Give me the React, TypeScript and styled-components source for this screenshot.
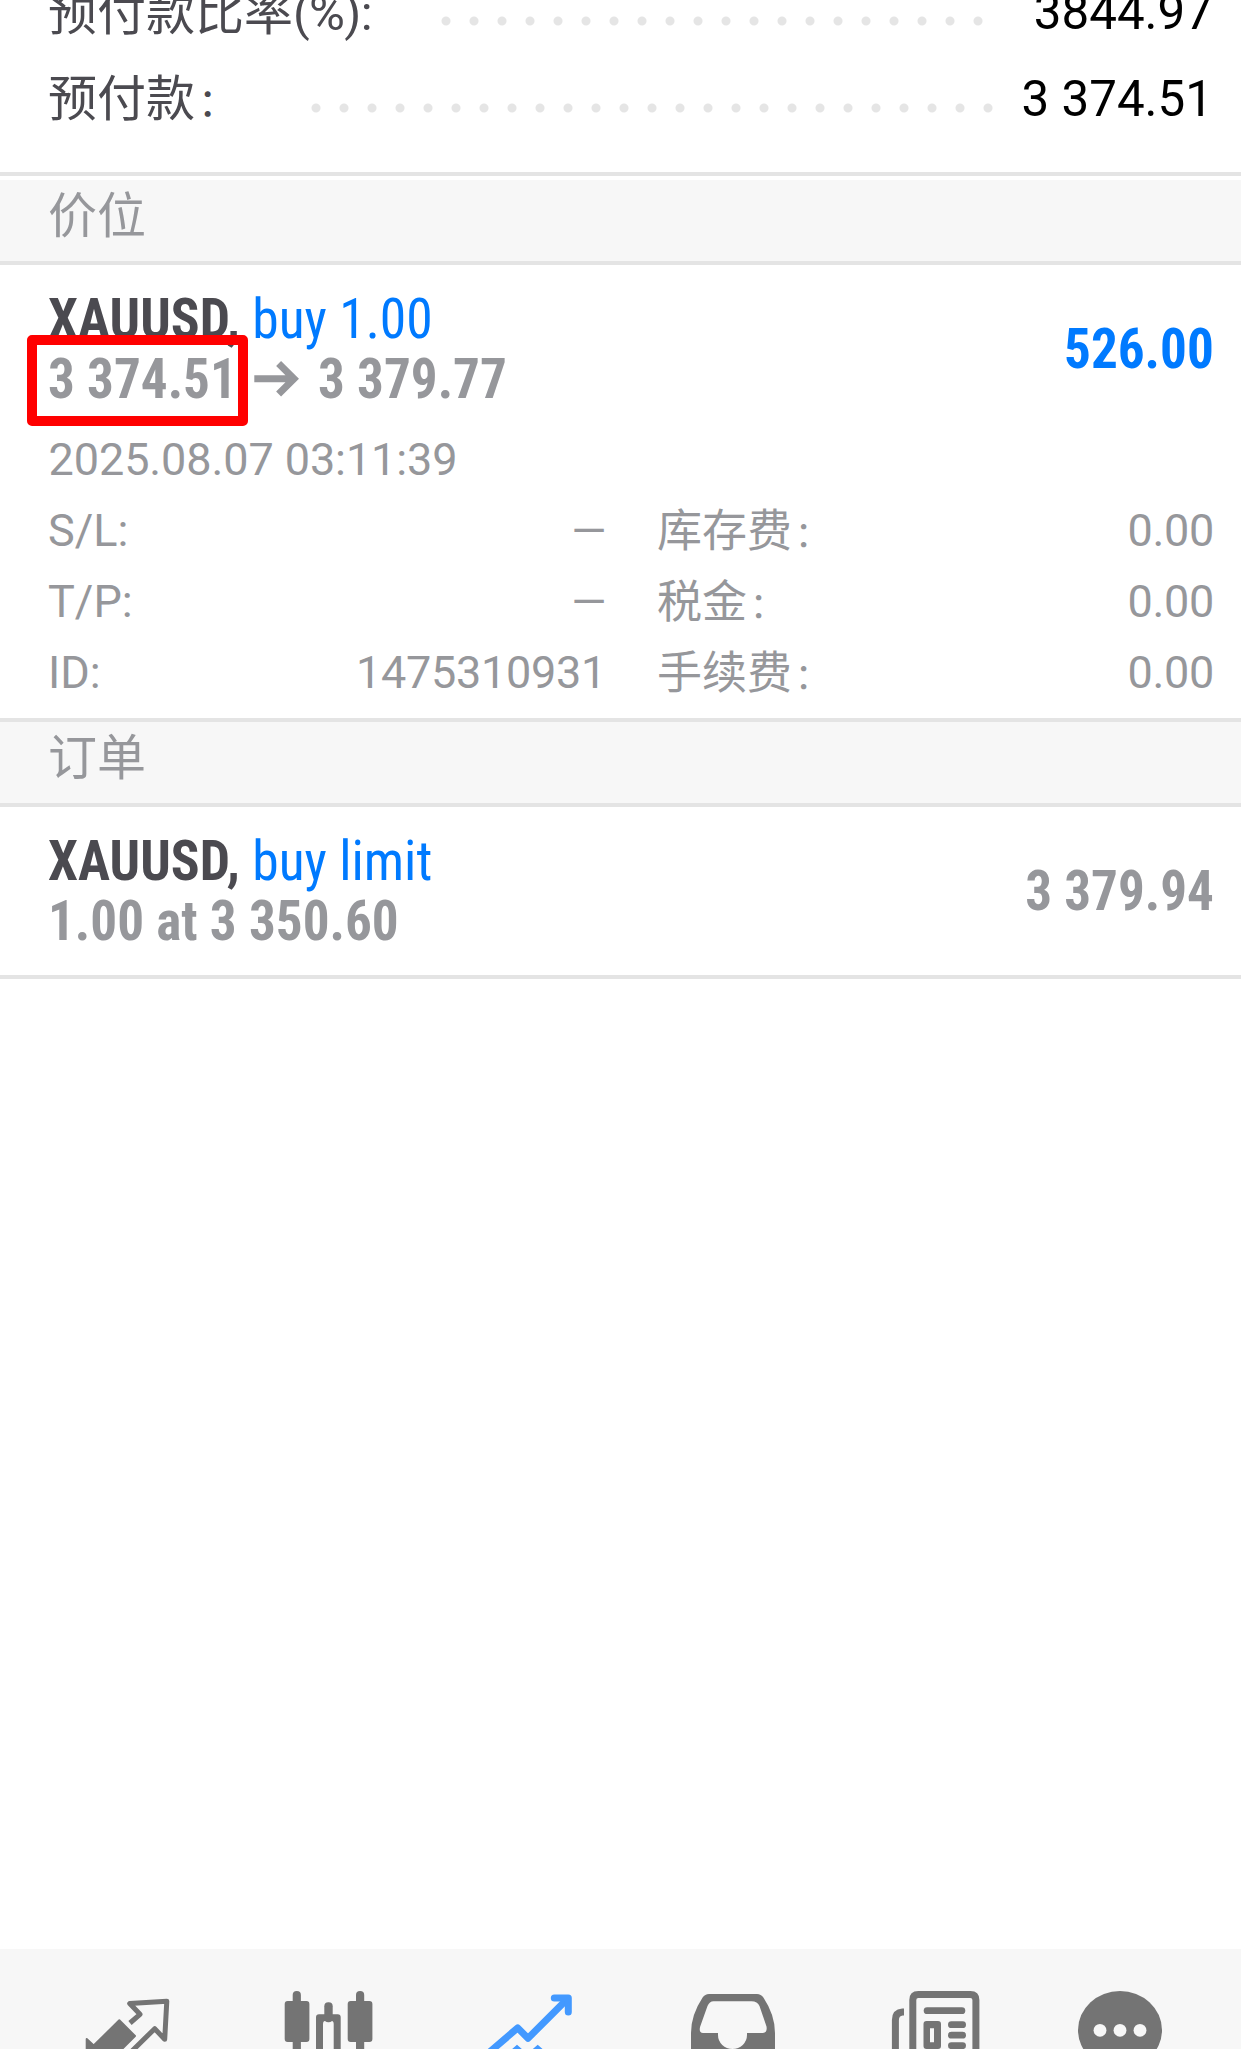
import React from "react";
import styled, { createGlobalStyle } from "styled-components";

const GlobalStyle = createGlobalStyle`
  * { box-sizing: border-box; }
  html, body { margin: 0; padding: 0; background: #fff; }
  body {
    font-family: Roboto, "Noto Sans CJK SC", sans-serif;
    color: #96979b;
    white-space: nowrap;
  }
`;

const Screen = styled.div`
  display: flex;
  flex-direction: column;
  width: 1241px;
  height: 2049px;
  overflow: hidden;
  background: #fff;
`;

const Summary = styled.section`
  display: flex;
  flex-direction: column;
  justify-content: flex-end;
  flex: none;
  height: 176px;
  padding: 0 28px 29px 48px;
  border-bottom: 4px solid #e4e4e4;
  margin-bottom: 4px;
  overflow: hidden;
`;

const SummaryRow = styled.div`
  display: flex;
  align-items: center;
  flex: none;
  height: 87px;
  line-height: 87px;
  font-size: 49px;
`;

const SummaryLabel = styled.span<{ $width: number }>`
  flex: none;
  width: ${(p) => p.$width}px;
  padding-top: 2px;
  color: #4b4a50;
`;

const Unit = styled.span`
  letter-spacing: -0.7px;
`;

const Colon = styled.span`
  font-size: 0.79em;
  margin-left: 0.08em;
`;

const Leader = styled.span<{ $dots: number }>`
  flex: none;
  width: ${(p) => p.$dots * 28}px;
  height: 28px;
  margin-top: 16px;
  background: radial-gradient(circle at 14px 14px, #e5e5e5 4px, transparent 5px) 0 0 / 28px 28px;
`;

const SummaryValue = styled.span`
  flex: 1;
  text-align: right;
  font-size: 49.3px;
  color: #000;
`;

const SectionTitle = styled.h2`
  flex: none;
  margin: 0;
  height: 85px;
  padding-left: 48px;
  font-size: 49px;
  font-weight: 400;
  line-height: 74px;
  background: #f7f7f7;
  border-bottom: 4px solid #e4e4e4;
`;

const Card = styled.article<{ $height: number }>`
  flex: none;
  height: ${(p) => p.$height}px;
  padding: 24px 27px 0 48px;
  border-bottom: 4px solid #e4e4e4;
`;

const CardHead = styled.div`
  display: flex;
  justify-content: space-between;
  align-items: center;
  height: 120px;
  font-family: "Roboto Condensed", Roboto, sans-serif;
  font-size: 56px;
  font-weight: 700;
  line-height: 60px;
`;

const HeadLine = styled.div`
  display: flex;
  align-items: center;
  height: 60px;
`;

const Narrow = styled.span<{ $from?: string; $by?: number }>`
  display: inline-block;
  white-space: pre;
  transform: scaleX(${(p) => p.$by ?? 0.949});
  transform-origin: ${(p) => p.$from ?? "left"} center;
`;

const Symbol = styled.span`
  color: #4b4a50;
`;

const Side = styled.span`
  color: #007aff;
  font-weight: 400;
`;

const Marked = styled.span`
  position: relative;
  width: 189px;

  &::after {
    content: "";
    position: absolute;
    box-sizing: border-box;
    left: -21px;
    top: -13.6px;
    width: 221px;
    height: 91px;
    border: 10px solid #ff0000;
    border-radius: 5px;
  }
`;

const Arrow = styled.svg`
  flex: none;
  width: 46px;
  height: 36px;
  margin: 0 18px 0 17px;
`;

const Amount = styled.span<{ $profit?: boolean }>`
  color: ${(p) => (p.$profit ? "#007aff" : "#96979b")};
`;

const OpenTime = styled.div`
  margin-top: 15px;
  padding-left: 0.6px;
  font-size: 45px;
  line-height: 71px;
  letter-spacing: -0.1px;
`;

const Details = styled.dl`
  display: grid;
  grid-template-columns: 558px 557px;
  column-gap: 51px;
  margin: 0;
  font-size: 45px;
  line-height: 71px;
`;

const Detail = styled.div`
  display: flex;
  justify-content: space-between;
  height: 71px;
`;

const Term = styled.dt<{ $drop?: boolean }>`
  line-height: ${(p) => (p.$drop ? 74 : 71)}px;
`;

const Value = styled.dd`
  margin: 0;
  letter-spacing: -0.3px;
`;

const TabBar = styled.nav`
  display: flex;
  gap: 90px;
  flex: none;
  height: 100px;
  margin-top: auto;
  padding-left: 75px;
  background: #f7f7f7;
`;

const TabIcon = styled.svg<{ $active?: boolean }>`
  flex: none;
  width: 110px;
  height: 100px;
  color: ${(p) => (p.$active ? "#4399ff" : "#747474")};
`;

const details = [
  ["S/L:", "—", "库存费", "0.00"],
  ["T/P:", "—", "税金", "0.00"],
  ["ID:", "1475310931", "手续费", "0.00"],
];

function Tabs() {
  return (
    <TabBar>
      <TabIcon viewBox="0 0 110 100" fill="none">
        <path
          d="M55 74L65 65.3L54.7 54.6L91.8 52.2L89.7 90.3L79.7 79.7L56 103"
          stroke="currentColor"
          strokeWidth="5"
          strokeLinejoin="round"
        />
        <path
          d="M44.3 71.3L60 87L44 103H11.7V90L18.7 96.5Z"
          fill="currentColor"
          stroke="currentColor"
          strokeWidth="2"
          strokeLinejoin="round"
        />
      </TabIcon>
      <TabIcon viewBox="0 0 110 100" fill="currentColor">
        <rect x="17.7" y="42" width="8.2" height="70" rx="4" />
        <rect x="9.7" y="52" width="24.7" height="41" rx="3" />
        <rect x="49.3" y="53.3" width="8.4" height="20" rx="4" />
        <path
          fillRule="evenodd"
          d="M44 65.3H62.7Q65.7 65.3 65.7 68.3V102H41V68.3Q41 65.3 44 65.3ZM51 71.7Q48 71.7 48 75V102H58.7V75Q58.7 71.7 55.7 71.7Z"
        />
        <rect x="81" y="42" width="8.2" height="70" rx="4" />
        <rect x="72.7" y="52" width="24.7" height="41" rx="3" />
      </TabIcon>
      <TabIcon $active viewBox="0 0 110 100" fill="none" stroke="currentColor" strokeWidth="7">
        <path d="M10 107L42.7 78.9L53 89.3L92.3 50" strokeLinejoin="round" />
        <path d="M79.3 49H93.3V63" strokeLinecap="round" strokeLinejoin="round" />
        <path d="M42 95.7L48 101H36ZM62.7 95.7L68.7 101H56.7Z" fill="currentColor" stroke="none" />
      </TabIcon>
      <TabIcon viewBox="0 0 110 100" fill="currentColor">
        <path
          fillRule="evenodd"
          d="M35 45H82Q86 45 88.4 48.5Q100 66 100 84V102H16V84Q16 66 27.6 48.5Q30 45 34 45ZM38.5 52.3Q34.5 52.3 32.5 57L25.2 77.5Q23.5 83.8 28 84H43V86A14.5 14 0 0 0 72 86V84H88Q92.5 83.8 91.5 77.5L84.5 57Q82.5 52.3 76.5 52.3Z"
        />
      </TabIcon>
      <TabIcon viewBox="0 0 110 100" fill="currentColor">
        <path
          d="M37.8 105V51Q37.8 45.5 43.3 45.5H95.4Q100.9 45.5 100.9 51V105M29 63H27.5Q20.4 63.5 20.4 71V105"
          fill="none"
          stroke="currentColor"
          strokeWidth="7"
        />
        <rect x="48.7" y="58.2" width="41.6" height="6.9" rx="3.4" />
        <path
          fillRule="evenodd"
          d="M51.5 72H63Q66 72 66 75V97Q66 100 63 100H51.5Q48.5 100 48.5 97V75Q48.5 72 51.5 72ZM55 79.3V93.3H59V79.3Z"
        />
        <rect x="73" y="72.3" width="18" height="6.8" rx="3.4" />
        <rect x="73" y="82.8" width="18" height="6.8" rx="3.4" />
        <rect x="73" y="93.3" width="18" height="6.8" rx="3.4" />
      </TabIcon>
      <TabIcon viewBox="0 0 110 100">
        <ellipse cx="45" cy="81" rx="42" ry="39" fill="currentColor" />
        <g fill="#f7f7f7">
          <circle cx="25" cy="81.3" r="6.4" />
          <circle cx="45" cy="81.3" r="6.4" />
          <circle cx="65" cy="81.3" r="6.4" />
        </g>
      </TabIcon>
    </TabBar>
  );
}

export default function App() {
  return (
    <Screen>
      <GlobalStyle />
      <Summary>
        <SummaryRow>
          <SummaryLabel $width={384}>
            预付款比率<Unit>(%):</Unit>
          </SummaryLabel>
          <Leader $dots={20} />
          <SummaryValue>3844.97</SummaryValue>
        </SummaryRow>
        <SummaryRow>
          <SummaryLabel $width={254}>
            预付款<Colon>：</Colon>
          </SummaryLabel>
          <Leader $dots={25} />
          <SummaryValue>3 374.51</SummaryValue>
        </SummaryRow>
      </Summary>

      <SectionTitle>价位</SectionTitle>
      <Card $height={457}>
        <CardHead>
          <div>
            <HeadLine>
              <Narrow $by={0.957}>
                <Symbol>XAUUSD, </Symbol>
                <Side>buy 1.00</Side>
              </Narrow>
            </HeadLine>
            <HeadLine>
              <Marked>
                <Narrow>3 374.51</Narrow>
              </Marked>
              <Arrow viewBox="0 0 46 36" fill="none" stroke="#96979b" strokeWidth="7">
                <path d="M0.3 17.7H40M24.6 2.5L40 17.7L24.6 33" />
              </Arrow>
              <Narrow>3 379.77</Narrow>
            </HeadLine>
          </div>
          <Amount $profit>
            <Narrow $from="right">526.00</Narrow>
          </Amount>
        </CardHead>
        <OpenTime>2025.08.07 03:11:39</OpenTime>
        <Details>
          {details.map(([leftTerm, leftValue, rightTerm, rightValue]) => (
            <React.Fragment key={leftTerm}>
              <Detail>
                <Term>{leftTerm}</Term>
                <Value>{leftValue}</Value>
              </Detail>
              <Detail>
                <Term $drop>
                  {rightTerm}
                  <Colon>：</Colon>
                </Term>
                <Value>{rightValue}</Value>
              </Detail>
            </React.Fragment>
          ))}
        </Details>
      </Card>

      <SectionTitle>订单</SectionTitle>
      <Card $height={172}>
        <CardHead>
          <div>
            <HeadLine>
              <Narrow $by={0.957}>
                <Symbol>XAUUSD, </Symbol>
                <Side>buy limit</Side>
              </Narrow>
            </HeadLine>
            <HeadLine>
              <Narrow>1.00 at 3 350.60</Narrow>
            </HeadLine>
          </div>
          <Amount>
            <Narrow $from="right">3 379.94</Narrow>
          </Amount>
        </CardHead>
      </Card>

      <Tabs />
    </Screen>
  );
}
